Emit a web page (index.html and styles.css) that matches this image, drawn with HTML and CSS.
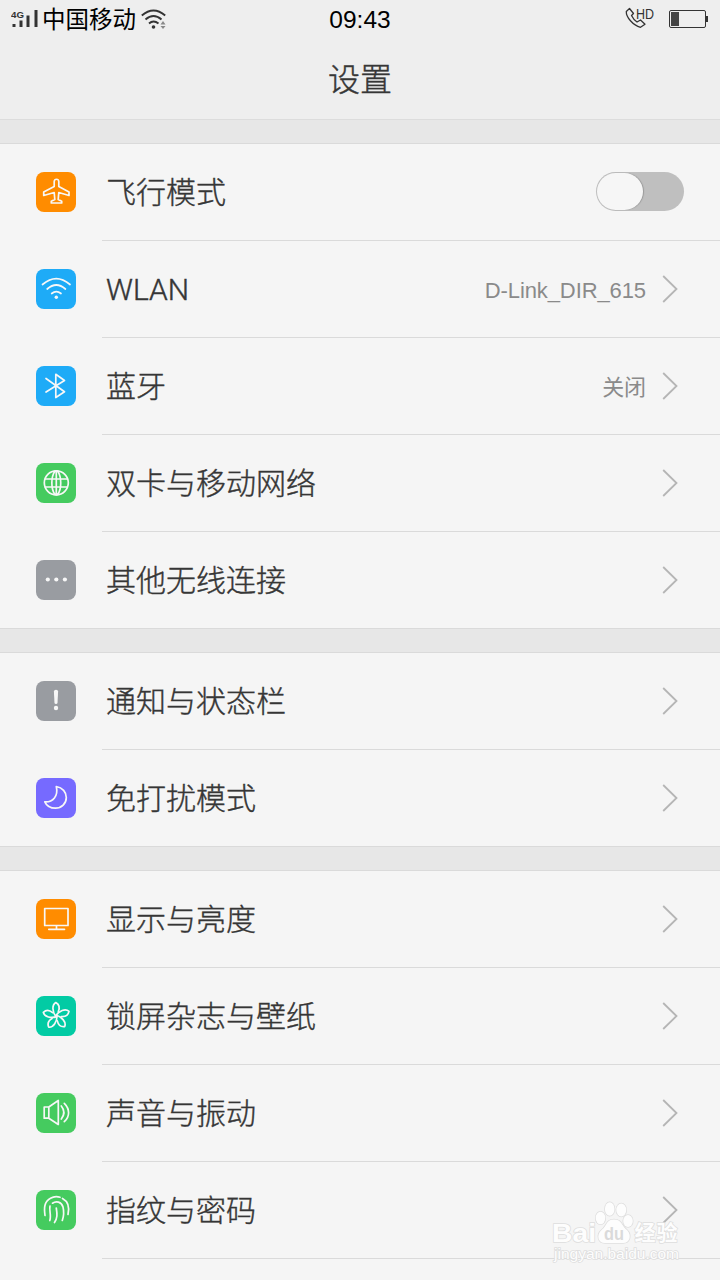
FILE: index.html
```html
<!DOCTYPE html>
<html lang="zh-CN">
<head>
  <meta charset="UTF-8">
  <meta name="viewport" content="width=device-width, initial-scale=1">
  <title>设置</title>
  <link rel="stylesheet" href="styles.css">
</head>
<body>

  <header>
    <div class="status-bar">
      <div class="status-left">
        <svg class="signal" width="28" height="22" viewBox="0 0 28 22">
          <text x="0" y="9" class="net" textLength="13" lengthAdjust="spacingAndGlyphs">4G</text>
          <path d="M1.500 15h3v3h-3zM8.500 11.500h3v6.500h-3zM15.500 6.500h3v11.500h-3zM23.500 1h3v17h-3z"/>
        </svg>
        <span class="carrier">中国移动</span>
        <svg class="wifi" width="26" height="22" viewBox="0 0 26 22">
          <g fill="none" stroke="#333" stroke-width="1.900">
            <path d="M.8 6.500Q12.500-3.500 24.200 6.500"/>
            <path d="M4.500 10.500Q12.500 3.500 20.500 10.500"/>
            <path d="M8 14.500Q12.500 10.400 17.500 14.500"/>
          </g>
          <circle cx="12.500" cy="18" r="1.800" fill="#333"/>
          <path d="M19.500 15.500l2.500-3.500 2.500 3.500zM19.500 17l2.500 3 2.500-3z" fill="#888"/>
        </svg>
      </div>
      <div class="clock">09:43</div>
      <div class="status-right">
        <svg class="call" width="32" height="28" viewBox="0 0 32 28">
          <path d="M4.500 4.500L1.300 7.500C1 13 8 21.500 15.500 23.300L20 20.200 15.500 16 12 18C9.500 16.500 8 14.500 6.500 11.500L8.500 9.500z" fill="none" stroke="#333" stroke-width="1.300" stroke-linejoin="round"/>
          <text x="11" y="14.500" class="hd" textLength="18" lengthAdjust="spacingAndGlyphs">HD</text>
        </svg>
        <div class="battery"><div class="level"></div></div>
      </div>
    </div>
    <h1>设置</h1>
  </header>

  <main>
    <section class="group">
      <div class="row">
        <svg class="icon orange" viewBox="0 0 40 40">
          <path d="M18.200 9.500C18.500 6.500 22.500 6.500 22.800 9.500V14.500L33 20V23.500L22.800 20.500 22.200 27.500 25.700 29.200V31H15.300V29.200L18.800 27.500 18.200 20.500 7.700 23.500V20L18.200 14.500z"/>
        </svg>
        <div class="cell">
          <span class="label">飞行模式</span>
          <div class="switch"><div class="knob"></div></div>
        </div>
      </div>
      <div class="row">
        <svg class="icon blue" viewBox="0 0 40 40">
          <path d="M6.500 15.500Q20.300 3.800 34 15.500M11.200 20Q20.300 12 29.400 20M15.700 24.500Q20.300 20.600 25 24.500"/>
          <circle class="dot" cx="20.300" cy="28.300" r="1.700"/>
        </svg>
        <div class="cell">
          <span class="label">WLAN</span>
          <span class="value">D-Link_DIR_615</span>
          <svg class="arrow" viewBox="0 0 16 28"><path d="M1.200 1L14.500 14 1.200 27"/></svg>
        </div>
      </div>
      <div class="row">
        <svg class="icon blue" viewBox="0 0 40 40">
          <path d="M10 12.500L28.500 25.800 19.800 31.500V8.300L28.500 14.500 10 26"/>
        </svg>
        <div class="cell">
          <span class="label">蓝牙</span>
          <span class="value">关闭</span>
          <svg class="arrow" viewBox="0 0 16 28"><path d="M1.200 1L14.500 14 1.200 27"/></svg>
        </div>
      </div>
      <div class="row">
        <svg class="icon green" viewBox="0 0 40 40">
          <circle cx="20.300" cy="19.800" r="12"/>
          <path d="M20.300 7.800v24M9.500 16h21.600M9.500 24h21.600M19 8C14.800 14 14.800 26 19 31.500M21.600 8C25.800 14 25.800 26 21.600 31.500"/>
        </svg>
        <div class="cell">
          <span class="label">双卡与移动网络</span>
          <svg class="arrow" viewBox="0 0 16 28"><path d="M1.200 1L14.500 14 1.200 27"/></svg>
        </div>
      </div>
      <div class="row">
        <svg class="icon gray" viewBox="0 0 40 40">
          <circle class="dot" cx="11.800" cy="19.500" r="2.100"/>
          <circle class="dot" cx="20.300" cy="19.500" r="2.100"/>
          <circle class="dot" cx="28.900" cy="19.500" r="2.100"/>
        </svg>
        <div class="cell">
          <span class="label">其他无线连接</span>
          <svg class="arrow" viewBox="0 0 16 28"><path d="M1.200 1L14.500 14 1.200 27"/></svg>
        </div>
      </div>
    </section>

    <section class="group">
      <div class="row">
        <svg class="icon gray" viewBox="0 0 40 40">
          <path class="dot" d="M17.900 10.500Q17.900 8.800 20 8.800T22.100 10.500L21.500 22Q21.300 23 20 23T18.500 22z"/>
          <circle class="dot" cx="20" cy="27" r="2.200"/>
        </svg>
        <div class="cell">
          <span class="label">通知与状态栏</span>
          <svg class="arrow" viewBox="0 0 16 28"><path d="M1.200 1L14.500 14 1.200 27"/></svg>
        </div>
      </div>
      <div class="row">
        <svg class="icon purple" viewBox="0 0 40 40">
          <path d="M20.300 8.500C26.500 9.500 30.300 14 30.300 19.500 30.300 25.800 25.500 30.200 19.500 30.200 14.500 30.200 10.500 27.800 8.800 23.900 17 24.300 22.500 18 20.300 8.500z"/>
        </svg>
        <div class="cell">
          <span class="label">免打扰模式</span>
          <svg class="arrow" viewBox="0 0 16 28"><path d="M1.200 1L14.500 14 1.200 27"/></svg>
        </div>
      </div>
    </section>

    <section class="group open">
      <div class="row">
        <svg class="icon orange" viewBox="0 0 40 40">
          <path d="M8.700 9.500H32V26.500H8.700zM20.500 27v3M12.800 30.300H28.500"/>
        </svg>
        <div class="cell">
          <span class="label">显示与亮度</span>
          <svg class="arrow" viewBox="0 0 16 28"><path d="M1.200 1L14.500 14 1.200 27"/></svg>
        </div>
      </div>
      <div class="row">
        <svg class="icon teal" viewBox="0 0 40 40">
          <path id="petal" d="M19.800 20.500C16.500 16 15.500 9 19.800 6.500 23.300 8.500 23.800 12 22.300 15.500"/>
          <use href="#petal" transform="rotate(72 20.300 20)"/>
          <use href="#petal" transform="rotate(144 20.300 20)"/>
          <use href="#petal" transform="rotate(216 20.300 20)"/>
          <use href="#petal" transform="rotate(288 20.300 20)"/>
        </svg>
        <div class="cell">
          <span class="label">锁屏杂志与壁纸</span>
          <svg class="arrow" viewBox="0 0 16 28"><path d="M1.200 1L14.500 14 1.200 27"/></svg>
        </div>
      </div>
      <div class="row">
        <svg class="icon green" viewBox="0 0 40 40">
          <path d="M8.200 14H12.800V25.200H8.200zM12.800 14L22.300 7.500V31.500L12.800 25.200M25.300 13C28.500 17 28.500 22 25.300 26M28.300 10.300C34 16 34 23.500 28.300 28.700"/>
        </svg>
        <div class="cell">
          <span class="label">声音与振动</span>
          <svg class="arrow" viewBox="0 0 16 28"><path d="M1.200 1L14.500 14 1.200 27"/></svg>
        </div>
      </div>
      <div class="row">
        <svg class="icon green" viewBox="0 0 40 40">
          <path d="M9 25.500C8 18 8 12 14.500 8.300 17.500 6.500 21 6.300 24 7.300M26.500 8.500C33 12 33.500 18 32 24.500M13.800 30.500C15.500 26 13 20 14 16M16.500 13.200C20 10.700 25.500 11.500 27 17 28 21 27.800 26 26.300 30.500M18.500 32.500C21.500 28 21.300 24.500 20.300 18"/>
        </svg>
        <div class="cell">
          <span class="label">指纹与密码</span>
          <svg class="arrow" viewBox="0 0 16 28"><path d="M1.200 1L14.500 14 1.200 27"/></svg>
        </div>
      </div>
    </section>
  </main>

  <svg class="watermark" width="136" height="68" viewBox="0 0 136 68">
    <ellipse cx="49.500" cy="20" rx="4.800" ry="6.300"/>
    <ellipse cx="58.700" cy="11" rx="4.800" ry="6.800"/>
    <ellipse cx="70.300" cy="12" rx="5" ry="6.500"/>
    <ellipse cx="77" cy="23" rx="4.800" ry="6"/>
    <path d="M63 21.500C55 21.500 56 28 50.500 32 45 37 47 45 54 45H72C79 45 81 37 76 32 70.500 28 71 21.500 63 21.500z"/>
    <text class="brand" x="1" y="43.500" textLength="44" lengthAdjust="spacingAndGlyphs">Bai</text>
    <text class="du" x="53" y="42" textLength="20" lengthAdjust="spacingAndGlyphs">du</text>
    <text class="cn" x="83.500" y="42" textLength="43">经验</text>
    <text class="site" x="3" y="61" textLength="125" lengthAdjust="spacingAndGlyphs">jingyan.baidu.com</text>
  </svg>

</body>
</html>
```
FILE: styles.css
```css
* {
  box-sizing: border-box;
}
body {
  margin: 0;
  height: 1280px;
  overflow: hidden;
  position: relative;
  background: #e7e7e7;
  color: #363636;
  font-family: Roboto, "Noto Sans CJK SC", sans-serif;
  font-weight: 300;
}
header {
  height: 120px;
  background: #eeeeee;
  border-bottom: 1px solid #dcdcdc;
}
.status-bar {
  height: 38px;
  display: grid;
  grid-template-columns: 1fr auto 1fr;
  align-items: center;
  padding: 0 11px;
  color: #000;
}
.status-left,
.status-right {
  display: flex;
  align-items: center;
}
.status-right {
  justify-content: flex-end;
  gap: 12px;
}
.signal {
  fill: #333;
}
.net {
  font: 700 9.5px "Liberation Sans", sans-serif;
}
.carrier {
  font-size: 23.500px;
  line-height: 36px;
  font-weight: 400;
  margin: 0 0 0 3px;
}
.wifi {
  margin-left: 5px;
}
.clock {
  font-family: "Liberation Sans", sans-serif;
  font-size: 24.500px;
  font-weight: 400;
  line-height: 38px;
  padding-top: 1px;
}
.call {
  margin-top: -4px;
}
.hd {
  font: 400 14.5px "Liberation Sans", sans-serif;
  fill: #333;
}
.battery {
  position: relative;
  width: 37px;
  height: 18px;
  margin: -2px 3px 0 0;
  padding: 1px;
  border: 1px solid #333;
  border-radius: 2px;
}
.battery::after {
  content: "";
  position: absolute;
  right: -3px;
  top: 5px;
  width: 2px;
  height: 6px;
  background: #333;
}
.level {
  width: 8px;
  height: 14px;
  background: #444;
}
h1 {
  margin: 0;
  text-align: center;
  font-size: 32px;
  line-height: 84px;
  font-weight: 300;
  -webkit-text-stroke: 0.4px;
}
.group {
  margin-top: 23px;
  background: #f5f5f5;
  border-top: 1px solid #dadada;
}
.row {
  display: flex;
  align-items: flex-start;
  height: 97px;
  padding-left: 36px;
}
.row:last-child {
  border-bottom: 1px solid #dadada;
}
.icon {
  flex: none;
  width: 40px;
  height: 40px;
  margin-top: 28px;
  border-radius: 8px;
  fill: none;
  stroke: #f7f7f7;
  stroke-width: 1.700;
  stroke-linecap: round;
  stroke-linejoin: round;
}
.icon .dot {
  fill: #f7f7f7;
  stroke: none;
}
.orange { background: #ff8c00; }
.blue { background: #1eabf7; }
.green { background: #45cb5f; }
.gray { background: #999ca1; }
.purple { background: #766aff; }
.teal { background: #02cba4; }
.cell {
  flex: 1;
  display: flex;
  align-items: center;
  height: 97px;
  margin-left: 26px;
  padding: 0 42px 0 4px;
  border-bottom: 1px solid #dadada;
}
.row:last-child .cell {
  height: 96px;
  border-bottom: none;
}
/* the last group carries on below the screen */
.open {
  height: 420px;
}
.open .row:last-child {
  border-bottom: none;
}
.open .row:last-child .cell {
  height: 97px;
  border-bottom: 1px solid #dadada;
}
.label {
  flex: 1;
  font-size: 30px;
  line-height: 44px;
  padding-top: 2px;
  -webkit-text-stroke: 0.4px;
}
.value {
  margin-right: 16px;
  padding-top: 3px;
  color: #8a8a8a;
  font-family: "Liberation Sans", "Noto Sans CJK SC", sans-serif;
  font-size: 22px;
  line-height: 32px;
  font-weight: 400;
  letter-spacing: -0.1px;
}
.arrow {
  width: 16px;
  height: 28px;
  fill: none;
  stroke: #b5b5b5;
  stroke-width: 1.800;
}
.switch {
  width: 88px;
  height: 39px;
  margin: -1px -6px 0 0;
  padding: 1px;
  border-radius: 20px;
  background: #bfbfbf;
}
.knob {
  width: 46px;
  height: 37px;
  border-radius: 19px;
  background: #f6f6f6;
  box-shadow: 1px 0 1px #999;
}
.watermark {
  position: absolute;
  left: 551px;
  top: 1198px;
  fill: #fdfdfd;
  stroke: #dedede;
  stroke-width: 1.500;
  paint-order: stroke;
}
.brand {
  font: 700 26px "Liberation Sans", sans-serif;
}
.du {
  font: 700 19px "Liberation Sans", sans-serif;
  fill: #dadada;
  stroke: none;
}
.cn {
  font: 700 21px "Noto Sans CJK SC", sans-serif;
}
.site {
  font: 400 14px "Liberation Sans", sans-serif;
}
```
